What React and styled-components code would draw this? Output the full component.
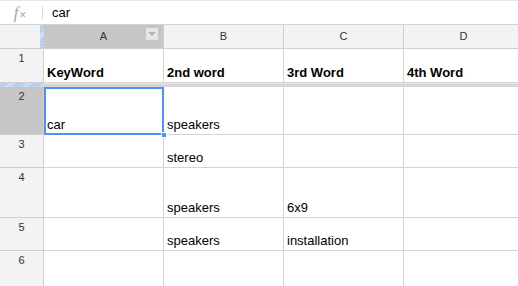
import React from "react";
import styled, { createGlobalStyle, css } from "styled-components";

const Global = createGlobalStyle`
  html, body { margin: 0; padding: 0; background: #fff; overflow: hidden; }
  body { font-family: Arial, "Liberation Sans", sans-serif; }
`;

const Page = styled.div`
  width: 518px;
  height: 286px;
  overflow: hidden;
  display: flex;
  flex-direction: column;
  border-top: 1px solid #e6e6e6;
  box-sizing: border-box;
`;

const FormulaBar = styled.div`
  height: 24px;
  flex: none;
  display: flex;
  align-items: center;
  border-bottom: 1px solid #d4d4d4;
  box-sizing: border-box;
  background: #fff;
`;

const FxLabel = styled.div`
  width: 43px;
  display: flex;
  justify-content: center;
  align-items: center;
  position: relative;
  font-family: "Liberation Serif", serif;
  font-style: italic;
  font-size: 17px;
  color: #a8a8a8;
  padding-right: 3px;
  box-sizing: border-box;
  height: 100%;
  &::after {
    content: "";
    position: absolute;
    right: 0;
    top: 5px;
    height: 13px;
    width: 1px;
    background: #dadada;
  }
`;

const FxSub = styled.span`
  font-size: 12px;
  font-style: normal;
  font-family: "Liberation Sans", sans-serif;
  margin-left: 1px;
  position: relative;
  top: 2px;
`;

const FormulaText = styled.div`
  padding-left: 9px;
  font-family: "Liberation Sans", Arial, sans-serif;
  font-size: 13px;
  color: #000;
`;

const Grid = styled.div`
  display: grid;
  grid-template-columns: 44px repeat(4, 120px);
  grid-template-rows: 24px 34px 4px 48px 33px 50px 33px 40px;
`;

const hatch = css`
  background: repeating-linear-gradient(
    135deg,
    #a9c4f0 0px,
    #a9c4f0 1px,
    #d9e5f8 1px,
    #d9e5f8 2px
  );
`;

const Corner = styled.div`
  background: #f3f3f3;
  border-right: 1px solid #cfcfcf;
  border-bottom: 1px solid #cfcfcf;
  box-sizing: border-box;
  position: relative;
  &::after {
    content: "";
    position: absolute;
    right: -1px;
    top: 0;
    bottom: -1px;
    width: 4px;
    ${hatch}
  }
`;

const ColHead = styled.div`
  background: ${(p) => (p.$selected ? "#c6c6c6" : "#f3f3f3")};
  border-right: 1px solid #cfcfcf;
  border-bottom: 1px solid #cfcfcf;
  box-sizing: border-box;
  display: flex;
  align-items: center;
  justify-content: center;
  font-family: "Liberation Sans", Arial, sans-serif;
  font-size: 11px;
  color: #333;
  position: relative;
  padding-bottom: 1px;
`;

const DropBtn = styled.div`
  position: absolute;
  right: 5px;
  top: 3px;
  width: 12px;
  height: 12px;
  background: #e6e6e6;
  display: flex;
  align-items: center;
  justify-content: center;
  &::after {
    content: "";
    border-left: 4px solid transparent;
    border-right: 4px solid transparent;
    border-top: 4px solid #b4b4b4;
  }
`;

const RowHead = styled.div`
  background: ${(p) => (p.$selected ? "#c6c6c6" : "#f3f3f3")};
  border-right: 1px solid #cfcfcf;
  border-bottom: ${(p) => (p.$noBorder ? "none" : "1px solid #cfcfcf")};
  box-sizing: border-box;
  display: flex;
  justify-content: center;
  align-items: flex-start;
  padding-top: 3px;
  font-family: "Liberation Sans", Arial, sans-serif;
  font-size: 11px;
  color: #333;
`;

const FreezeHead = styled.div`
  ${hatch}
`;

const FreezeBar = styled.div`
  background: #d6d6d6;
  border-top: 1px solid #e6e6e6;
  box-sizing: border-box;
`;

const Cell = styled.div`
  border-right: 1px solid #d4d4d4;
  border-bottom: ${(p) => (p.$noBorder ? "none" : "1px solid #d4d4d4")};
  box-sizing: border-box;
  display: flex;
  align-items: flex-end;
  padding: 0 3px 2px;
  font-family: "Liberation Sans", Arial, sans-serif;
  font-size: 13px;
  font-weight: ${(p) => (p.$bold ? 700 : 400)};
  color: #000;
  white-space: nowrap;
  overflow: visible;
  position: relative;
  ${(p) =>
    p.$active &&
    css`
      &::before {
        content: "";
        position: absolute;
        left: 0;
        top: 0;
        right: -1px;
        bottom: -1px;
        border: 2px solid #4d90fe;
        pointer-events: none;
      }
      &::after {
        content: "";
        position: absolute;
        right: -4px;
        bottom: -4px;
        width: 6px;
        height: 6px;
        background: #4d90fe;
        border: 1px solid #fff;
        box-sizing: border-box;
        z-index: 2;
      }
    `}
`;

const columns = ["A", "B", "C", "D"];
const rows = [
  { n: "1", cells: ["KeyWord", "2nd word", "3rd Word", "4th Word"], bold: true },
  { freeze: true },
  { n: "2", cells: ["car", "speakers", "", ""], selected: true },
  { n: "3", cells: ["", "stereo", "", ""] },
  { n: "4", cells: ["", "speakers", "6x9", ""] },
  { n: "5", cells: ["", "speakers", "installation", ""] },
  { n: "6", cells: ["", "", "", ""], last: true },
];

export default function App() {
  return (
    <>
      <Global />
      <Page>
        <FormulaBar>
          <FxLabel>
            f<FxSub>×</FxSub>
          </FxLabel>
          <FormulaText>car</FormulaText>
        </FormulaBar>
        <Grid>
          <Corner />
          {columns.map((c, i) => (
            <ColHead key={c} $selected={i === 0}>
              {c}
              {i === 0 && <DropBtn />}
            </ColHead>
          ))}
          {rows.map((r, ri) =>
            r.freeze ? (
              <React.Fragment key={"f" + ri}>
                <FreezeHead />
                {columns.map((c) => (
                  <FreezeBar key={c} />
                ))}
              </React.Fragment>
            ) : (
              <React.Fragment key={r.n}>
                <RowHead $selected={r.selected} $noBorder={r.last}>
                  {r.n}
                </RowHead>
                {r.cells.map((t, ci) => (
                  <Cell
                    key={ci}
                    $bold={r.bold}
                    $noBorder={r.last}
                    $active={r.selected && ci === 0}
                  >
                    {t}
                  </Cell>
                ))}
              </React.Fragment>
            )
          )}
        </Grid>
      </Page>
    </>
  );
}
